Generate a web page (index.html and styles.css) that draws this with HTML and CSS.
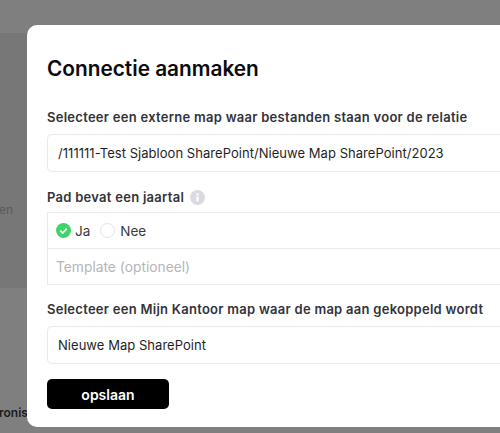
FILE: index.html
```html
<!DOCTYPE html>
<html lang="nl">
<head>
<meta charset="utf-8">
<title>Connectie aanmaken</title>
<link rel="stylesheet" href="styles.css">
</head>
<body>
<div class="backdrop">
  <div class="page-band"></div>
  <div class="page-panel"><span class="page-text-en">en</span></div>
  <div class="page-gap"><span class="page-text-ronis">ronis</span></div>
</div>
<main class="modal">
  <h1 class="title">Connectie aanmaken</h1>
  <label class="label label-first">Selecteer een externe map waar bestanden staan voor de relatie</label>
  <div class="field">/111111-Test Sjabloon SharePoint/Nieuwe Map SharePoint/2023</div>
  <div class="label label-info">Pad bevat een jaartal
    <svg class="info" viewBox="0 0 15 15" width="15" height="15" aria-hidden="true"><circle cx="7.5" cy="7.5" r="7.5" fill="#d9dae3"/><rect x="6.4" y="6.4" width="2.2" height="5" fill="#fff"/><rect x="6.4" y="3.4" width="2.2" height="2" fill="#fff"/></svg>
  </div>
  <div class="group">
    <div class="radios">
      <span class="radio-on"><svg viewBox="0 0 15 15" width="15" height="15" aria-hidden="true"><circle cx="7.5" cy="7.5" r="7.5" fill="#3ed46a"/><path d="M4.3 7.7 6.6 10 10.8 5.6" fill="none" stroke="#fff" stroke-width="1.7"/></svg></span>
      <span class="radio-text">Ja</span>
      <span class="radio-off"></span>
      <span class="radio-text">Nee</span>
    </div>
    <div class="template">Template (optioneel)</div>
  </div>
  <label class="label label-third">Selecteer een Mijn Kantoor map waar de map aan gekoppeld wordt</label>
  <div class="field">Nieuwe Map SharePoint</div>
  <button class="save" type="button">opslaan</button>
</main>
</body>
</html>
```

FILE: styles.css
```css
* { box-sizing: border-box; }
html, body { margin: 0; height: 100%; }
body {
  width: 500px;
  height: 433px;
  overflow: hidden;
  position: relative;
  background: #7f7f7f;
  font-family: "Inter", "Noto Sans", sans-serif;
  color: #2f2f36;
}
.backdrop { position: absolute; inset: 0; display: flex; flex-direction: column; }
.page-band { height: 33px; background: #7f7f7f; }
.page-panel { height: 255px; background: #777; position: relative; }
.page-gap { flex: 1; background: #7f7f7f; position: relative; }
.page-text-en { position: absolute; left: -1px; top: 169px; font-size: 12px; color: #5a5a5a; }
.page-text-ronis { position: absolute; left: -1px; top: 117px; font-size: 12px; font-weight: 600; color: #1c1c1c; }
.modal {
  position: absolute;
  left: 27px;
  right: 0;
  top: 25px;
  height: 402px;
  background: #fff;
  border-radius: 10px 0 0 10px;
  padding: 0 0 0 20px;
  display: flex;
  flex-direction: column;
  align-items: stretch;
}
.title {
  margin: 32px 0 0;
  font-size: 20.8px;
  line-height: 24px;
  font-weight: 600;
  color: #0b0b0f;
}
.label {
  display: flex;
  align-items: center;
  font-size: 13px;
  line-height: 18px;
  font-weight: 600;
  letter-spacing: 0.27px;
  color: #33333b;
}
.label-first { margin-top: 27px; }
.label-info { margin-top: 16px; gap: 6px; }
.label-third { margin-top: 15px; }
.field {
  margin-top: 8px;
  height: 38px;
  border: 1px solid #e9e9ee;
  border-right: 0;
  border-radius: 5px 0 0 5px;
  padding-left: 10px;
  display: flex;
  align-items: center;
  font-size: 13px;
  letter-spacing: 0.04px;
  color: #1f1f26;
}
.group {
  margin-top: 6px;
  height: 73px;
  border: 1px solid #e9e9ee;
  border-right: 0;
}
.radios {
  height: 36px;
  display: flex;
  align-items: center;
  padding-left: 8px;
  border-bottom: 1px solid #e9e9ee;
  font-size: 13.5px;
}
.radio-on { display: flex; margin-right: 4px; }
.radio-off {
  width: 15px;
  height: 15px;
  border: 1px solid #e3e3e9;
  border-radius: 50%;
  margin: 0 5px 0 10px;
}
.radio-text { color: #3a3a42; }
.template {
  height: 35px;
  display: flex;
  align-items: center;
  padding-left: 8px;
  font-size: 13.8px;
  color: #b5b5bb;
}
.save {
  margin-top: 15px;
  width: 122px;
  height: 30px;
  background: #000;
  color: #fff;
  border: 0;
  border-radius: 5px;
  font-family: inherit;
  font-size: 14px;
  font-weight: 600;
}
```
